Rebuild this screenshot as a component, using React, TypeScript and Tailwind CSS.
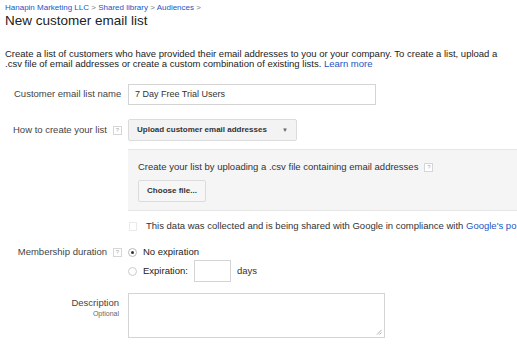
import React from 'react';

function Help() {
  return (
    <span className="inline-flex h-[9px] w-[9px] items-center justify-center border border-[#d6d6d6] bg-white text-[6px] leading-none text-[#aaa]">?</span>
  );
}

export default function App() {
  return (
    <div className="h-[344px] w-[517px] overflow-hidden bg-white font-['Liberation_Sans',Arial,sans-serif] text-[#222]">
      <div className="px-[5px] pt-[2px]">
        <div className="text-[8px] leading-[11px] text-[#1a56c4]">
          Hanapin Marketing LLC <span className="text-[#777]">&gt;</span> Shared library <span className="text-[#777]">&gt;</span> Audiences <span className="text-[#777]">&gt;</span>
        </div>
        <h1 className="text-[13.5px] leading-[15px] text-[#222]">New customer email list</h1>
        <p className="mt-[21px] text-[9.5px] leading-[10px] text-[#222]">
          Create a list of customers who have provided their email addresses to you or your company. To create a list, upload a
          <br />
          .csv file of email addresses or create a custom combination of existing lists. <span className="text-[#1a56c4]">Learn more</span>
        </p>
      </div>

      <div className="mt-[15px] grid grid-cols-[122px_1fr] items-center text-[9.5px] text-[#444]">
        <div className="pl-[14px]">Customer email list name</div>
        <div className="ml-[6px] flex h-[21px] w-[248px] items-center border border-[#d4d4d4] px-[6px] text-[9px] text-[#333]">7 Day Free Trial Users</div>
      </div>

      <div className="mt-[14px] grid grid-cols-[122px_1fr] items-center text-[9.5px] text-[#444]">
        <div className="flex items-center justify-between pl-[13px]">
          <span>How to create your list</span>
          <Help />
        </div>
        <div className="ml-[6px] flex h-[22px] w-[169px] items-center justify-between rounded-[2px] border border-[#dcdcdc] bg-[#f3f3f3] px-[8px] text-[8px] font-bold text-[#333]">
          <span>Upload customer email addresses</span>
          <span className="text-[6px] text-[#666]">▼</span>
        </div>
      </div>

      <div className="ml-[128px] mt-[8px] h-[62px] border-y border-[#e6e6e6] bg-[#f5f5f5] px-[10px] pt-[10px] text-[9.5px] text-[#333]">
        <div className="flex items-center gap-[6px]">
          <span>Create your list by uploading a .csv file containing email addresses</span>
          <Help />
        </div>
        <div className="mt-[6px] flex h-[22px] w-[68px] items-center justify-center rounded-[2px] border border-[#dcdcdc] bg-[#f6f6f6] text-[8px] font-bold text-[#333]">Choose file...</div>
      </div>

      <div className="ml-[129px] mt-[8px] flex items-center gap-[9px] whitespace-nowrap text-[9.5px] text-[#333]">
        <span className="h-[9px] w-[8px] shrink-0 border border-[#eaeaea] bg-white" />
        <span>
          This data was collected and is being shared with Google in compliance with <span className="text-[#1a56c4]">Google's po</span>
        </span>
      </div>

      <div className="mt-[12px] grid grid-cols-[122px_1fr] text-[9.5px] text-[#444]">
        <div className="flex h-[14px] items-center justify-end gap-[6px]">
          <span>Membership duration</span>
          <Help />
        </div>
        <div className="ml-[6px] text-[#222]">
          <div className="flex h-[14px] items-center gap-[6px]">
            <span className="flex h-[9px] w-[9px] items-center justify-center rounded-full border border-[#bbb] bg-white">
              <span className="h-[3px] w-[3px] rounded-full bg-[#333]" />
            </span>
            <span>No expiration</span>
          </div>
          <div className="mt-[1px] flex items-center gap-[6px]">
            <span className="h-[9px] w-[9px] rounded-full border border-[#ccc] bg-white" />
            <span>Expiration:</span>
            <span className="h-[22px] w-[37px] border border-[#d4d4d4] bg-white" />
            <span className="text-[#333]">days</span>
          </div>
        </div>
      </div>

      <div className="mt-[11px] grid grid-cols-[122px_1fr] text-[#444]">
        <div className="pr-[3px] pt-[4px] text-right">
          <div className="text-[9.5px] leading-[12px]">Description</div>
          <div className="text-[7px] leading-[9px] text-[#666]">Optional</div>
        </div>
        <div className="relative ml-[6px] h-[45px] w-[257px] border border-[#d4d4d4] bg-white">
          <svg className="absolute bottom-[2px] right-[2px]" width="6" height="6" viewBox="0 0 6 6">
            <path d="M1 5.5L5.5 1M3.5 5.5L5.5 3.5" stroke="#999" strokeWidth="0.8" />
          </svg>
        </div>
      </div>
    </div>
  );
}
